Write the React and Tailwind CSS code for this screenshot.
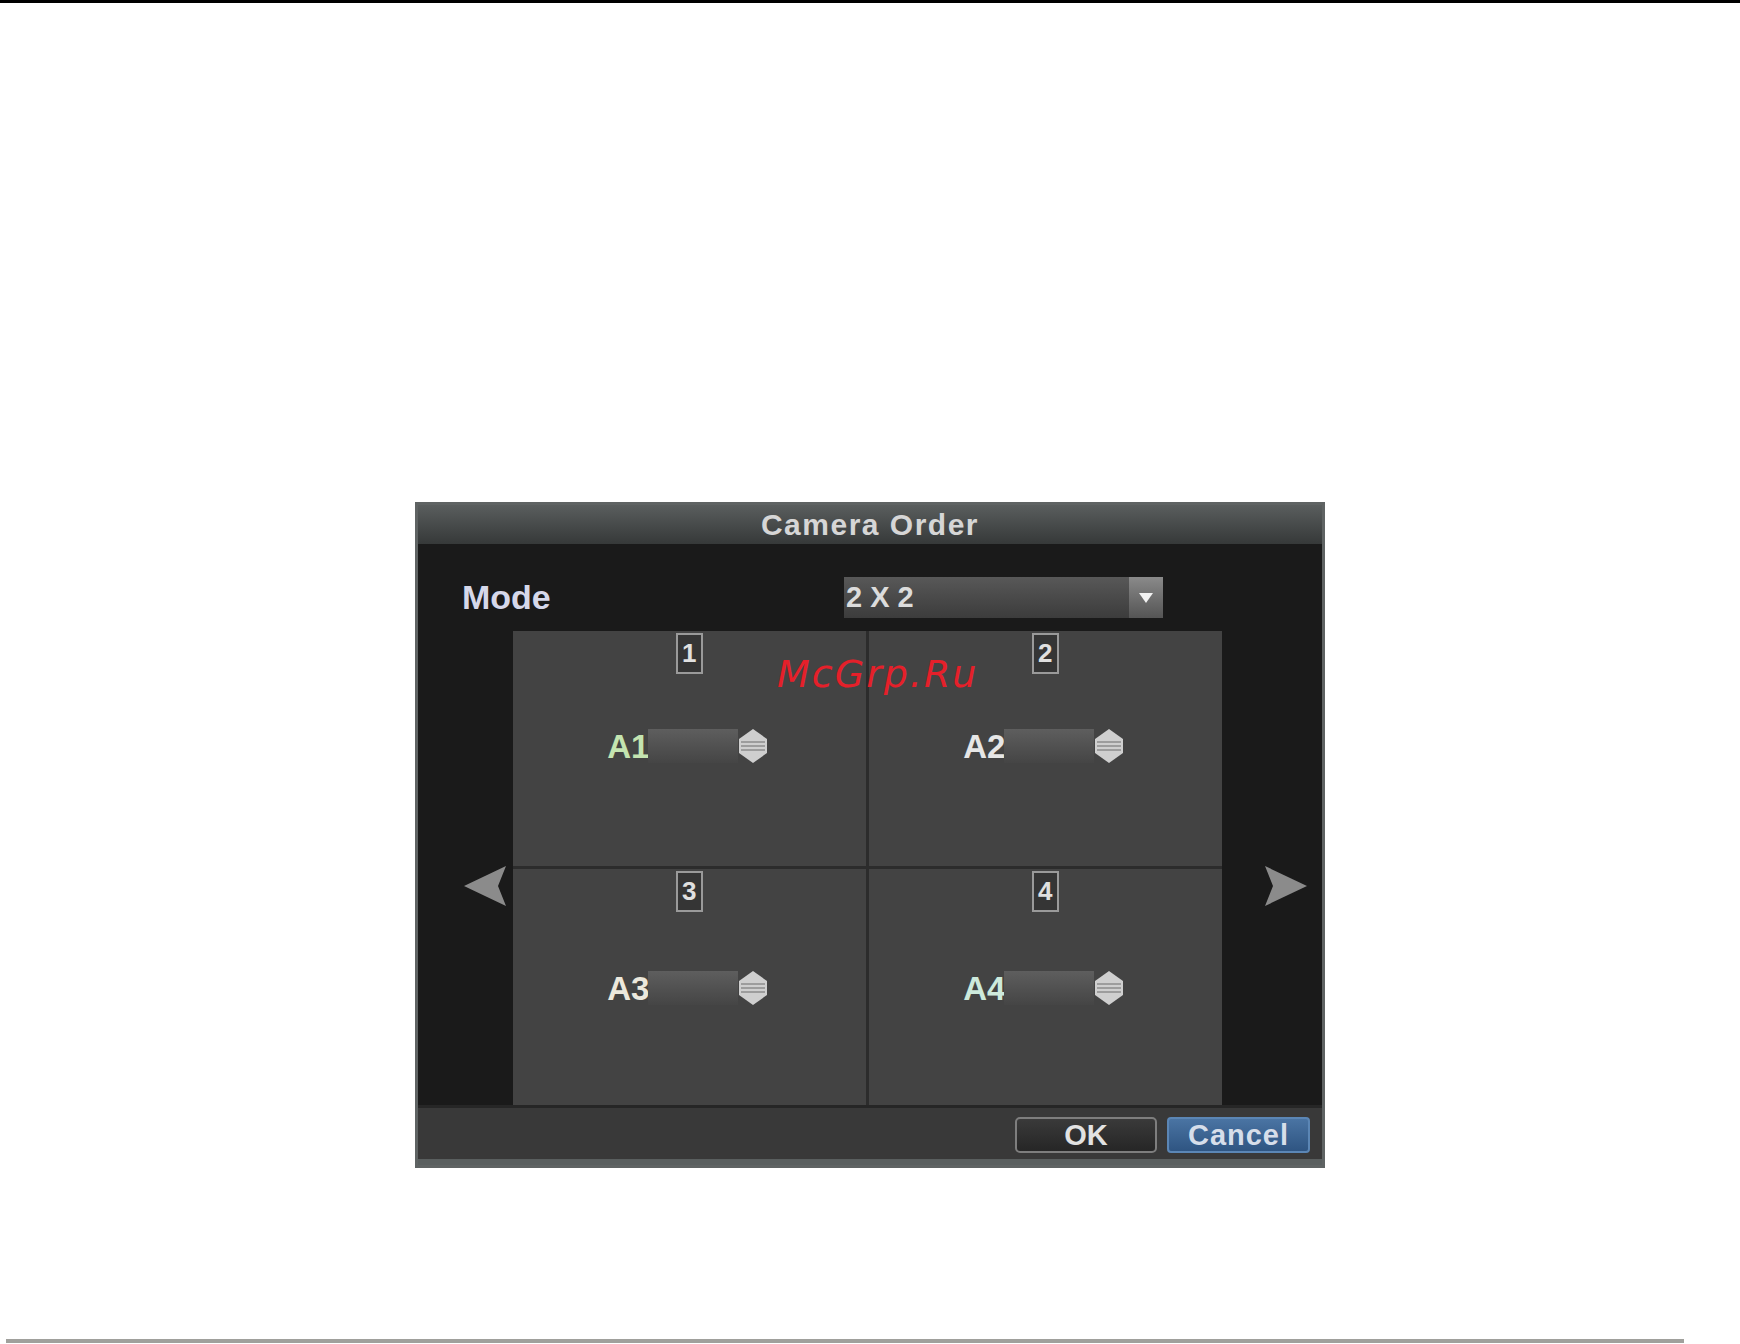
import React from 'react';

const font = { fontFamily: '"Liberation Sans", Arial, sans-serif' };

const Spinner = () => (
  <svg width="36" height="38" viewBox="0 0 36 38" className="-ml-[3px]">
    <path d="M18 2 L32 12 L32 26 L18 36 L4 26 L4 12 Z" fill="#cfcfcf" />
    <path d="M6 15 H30 M6 19 H30 M6 23 H30" stroke="#8d8d8d" strokeWidth="1.5" />
  </svg>
);

const Cell = ({ num, cam, camColor, offset, borders }) => (
  <div className={`flex flex-col items-center bg-[#434343] ${borders}`}>
    <div className="mt-[2px] w-[27px] h-[41px] border-2 border-[#9a9a9a] bg-[#353535] flex items-center justify-center text-[26px] font-bold text-[#e0e0e0]">
      {num}
    </div>
    <div className={`flex items-center ${offset}`}>
      <span className="text-[33px] font-bold leading-none w-[41px]" style={{ color: camColor }}>{cam}</span>
      <div className="w-[90px] h-[34px] bg-gradient-to-b from-[#5e5e5e] to-[#454545]" />
      <Spinner />
    </div>
  </div>
);

const Arrow = ({ dir }) => (
  <svg width="46" height="44" viewBox="0 0 46 44">
    {dir === 'left' ? (
      <path d="M44 2 L2 22 L44 42 L36 22 Z" fill="#8b8b8b" />
    ) : (
      <path d="M2 2 L44 22 L2 42 L10 22 Z" fill="#8b8b8b" />
    )}
  </svg>
);

export default function App() {
  return (
    <div className="w-[1740px] h-[1344px] bg-white flex flex-col relative" style={font}>
      <div className="h-[3px] bg-black" />
      <div className="h-[499px]" />
      <div className="ml-[415px] w-[910px] h-[666px] border-[3px] border-[#5f6363] bg-[#1a1a1a] flex flex-col">
        <div className="h-[39px] bg-gradient-to-b from-[#5a5e5e] to-[#363939] flex items-center justify-center">
          <span className="text-[30px] font-bold tracking-[1.5px] text-[#d6d6d6] leading-none">Camera Order</span>
        </div>
        <div className="h-[87px] flex items-start pt-[33px]">
          <span className="pl-[44px] w-[426px] text-[34px] font-bold text-[#d6d8ea] leading-[41px]">Mode</span>
          <div className="w-[319px] h-[41px] bg-gradient-to-b from-[#585858] to-[#3c3c3c] flex items-center">
            <span className="pl-[2px] text-[29px] font-bold text-[#dcdcdc] flex-1">2 X 2</span>
            <div className="w-[34px] h-[41px] bg-gradient-to-b from-[#8a8a8a] to-[#555555] flex items-center justify-center">
              <svg width="16" height="12" viewBox="0 0 16 12">
                <path d="M1 1 H15 L8 11 Z" fill="#f2f2f2" />
              </svg>
            </div>
          </div>
        </div>
        <div className="h-[474px] flex">
          <div className="w-[95px] flex flex-col pt-[233px] pl-[44px]">
            <Arrow dir="left" />
          </div>
          <div className="w-[709px] grid grid-cols-2 grid-rows-2 bg-[#2c2c2c]">
            <Cell num="1" cam="A1" camColor="#c4e4b0" offset="mt-[53px]" borders="border-r-[2px] border-b-[2px] border-[#2c2c2c]" />
            <Cell num="2" cam="A2" camColor="#e6e6e6" offset="mt-[53px]" borders="border-l-[1px] border-b-[2px] border-[#2c2c2c]" />
            <Cell num="3" cam="A3" camColor="#ece8dc" offset="mt-[57px]" borders="border-r-[2px] border-t-[1px] border-[#2c2c2c]" />
            <Cell num="4" cam="A4" camColor="#cdeadc" offset="mt-[57px]" borders="border-l-[1px] border-t-[1px] border-[#2c2c2c]" />
          </div>
          <div className="flex-1 flex flex-col pt-[233px] pl-[41px]">
            <Arrow dir="right" />
          </div>
        </div>
        <div className="flex-1 border-t-[3px] border-[#262626] bg-[#393939] border-b-[6px] border-b-[#5a5f5f] flex items-start justify-end pt-[9px] pr-[12px] gap-[10px]">
          <button className="w-[142px] h-[36px] rounded-[5px] border-2 border-[#7e7e7e] bg-gradient-to-b from-[#3a3a3a] to-[#262626] text-[29px] font-bold text-[#e2e2e2] leading-none">
            OK
          </button>
          <button className="w-[143px] h-[36px] rounded-[4px] border-2 border-[#5b86b5] bg-gradient-to-b from-[#4a74a3] to-[#2f5582] text-[29px] font-bold text-[#d6deea] leading-none tracking-[1px]">
            Cancel
          </button>
        </div>
      </div>
      <div className="h-[171px]" />
      <div className="ml-[6px] w-[1678px] h-[4px] bg-[#a0a09c]" />
      <span
        className="absolute left-[777px] top-[655px] text-[38px] italic tracking-[2px] text-[#e5202a] leading-none"
        style={{ fontFamily: '"DejaVu Sans", sans-serif', fontWeight: 300 }}
      >
        McGrp.Ru
      </span>
    </div>
  );
}
